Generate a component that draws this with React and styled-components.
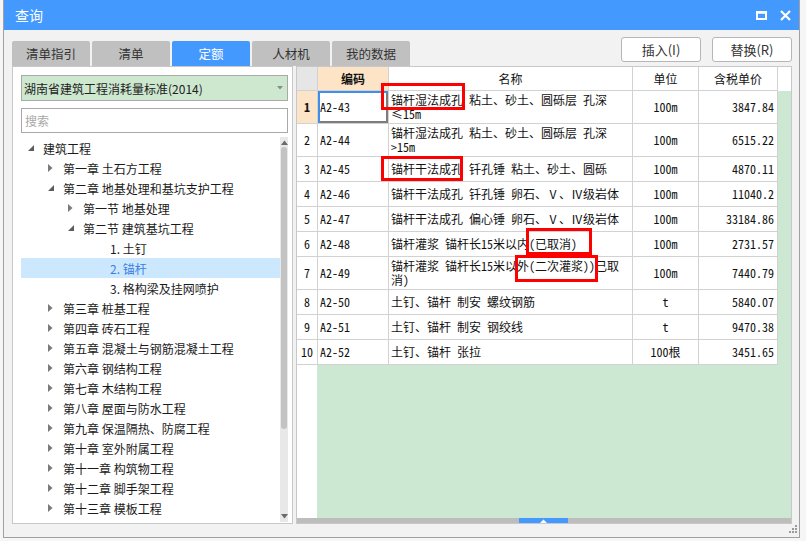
import React from "react";
import styled, { createGlobalStyle } from "styled-components";

const gridFont = `"Noto Sans Mono CJK SC", "Liberation Mono", "Noto Sans CJK SC", monospace`;

const GlobalStyle = createGlobalStyle`
  html, body {
    margin: 0;
    padding: 0;
  }
  body {
    background: #f6f6f6;
    font-family: "Noto Sans CJK SC", "Noto Sans", sans-serif;
    font-size: 12px;
    color: #222;
  }
  * {
    box-sizing: border-box;
  }
`;

const Window = styled.div`
  position: relative;
  margin-left: 3px;
  width: 797px;
  height: 538px;
  display: flex;
  flex-direction: column;
  background: #f2f2f2;
  border: 1px solid #a0a0a0;
  border-top: none;
`;

const TitleBar = styled.div`
  height: 30px;
  flex: none;
  display: flex;
  align-items: center;
  justify-content: space-between;
  background: #4499ff;
  color: #fff;
  padding: 0 8px 0 11px;
  font-size: 14px;
`;

const TitleControls = styled.div`
  display: flex;
  align-items: center;
  gap: 13px;
`;

const Body = styled.div`
  flex: 1;
  min-height: 0;
  display: flex;
  flex-direction: column;
  padding: 7px 7px 13px 8px;
`;

const Toolbar = styled.div`
  height: 29px;
  flex: none;
  display: flex;
  justify-content: space-between;
  align-items: flex-start;
`;

const Tabs = styled.div`
  align-self: flex-end;
  display: flex;
  gap: 2px;
`;

const Tab = styled.div`
  width: 78px;
  height: 25px;
  display: flex;
  align-items: center;
  justify-content: center;
  border-radius: 2px 2px 0 0;
  font-size: 12.5px;
  background: ${p => (p.active ? "#4499ff" : "#c0c0c0")};
  color: ${p => (p.active ? "#fff" : "#333")};
`;

const Buttons = styled.div`
  display: flex;
  gap: 11px;
`;

const Button = styled.div`
  width: 80px;
  height: 25px;
  display: flex;
  align-items: center;
  justify-content: center;
  background: #fff;
  border: 1px solid #b6b6b6;
  border-radius: 3px;
  font-size: 13px;
  color: #333;
`;

const Content = styled.div`
  flex: 1;
  min-height: 0;
  display: flex;
  gap: 3px;
`;

const LeftPanel = styled.div`
  width: 281px;
  flex: none;
  display: flex;
  flex-direction: column;
  background: #fff;
  border: 1px solid #c8c8c8;
  padding: 8px 4px 1px 8px;
`;

const Select = styled.div`
  height: 26px;
  flex: none;
  display: flex;
  align-items: center;
  justify-content: space-between;
  padding: 0 4px 0 2px;
  background: #cde8cf;
  border: 1px solid #a9a9a9;
  font-size: 12px;
  color: #222;
`;

const Search = styled.div`
  margin-top: 7px;
  height: 25px;
  flex: none;
  display: flex;
  align-items: center;
  padding-left: 3px;
  border: 1px solid #a9a9a9;
  color: #a8a8a8;
  font-size: 12px;
`;

const TreeBox = styled.div`
  margin-top: 4px;
  flex: 1;
  min-height: 0;
  display: flex;
  overflow: hidden;
`;

const TreeList = styled.div`
  flex: 1;
  min-width: 0;
  padding-top: 1px;
`;

const TreeRow = styled.div`
  height: 20px;
  display: flex;
  align-items: center;
  padding-left: ${p => p.indent}px;
  white-space: nowrap;
  font-size: 12px;
  background: ${p => (p.selected ? "#cce8ff" : "transparent")};
  color: ${p => (p.selected ? "#3d7fe0" : "#1a1a1a")};
`;

const Arrow = styled.span`
  width: 15px;
  flex: none;
  display: flex;
  align-items: center;
`;

const VScroll = styled.div`
  width: 8px;
  flex: none;
  display: flex;
  flex-direction: column;
  align-items: center;
  background: #e8e8e8;
  padding: 3px 0 3px;
`;

const VThumb = styled.div`
  width: 6px;
  height: 282px;
  margin-top: 2px;
  border-radius: 3px;
  background: #c3c3c3;
`;

const VSpacer = styled.div`
  flex: 1;
`;

const GridPanel = styled.div`
  position: relative;
  flex: 1;
  min-width: 0;
  display: flex;
  flex-direction: column;
  background: #fff;
  border: 1px solid #c8c8c8;
`;

const GridArea = styled.div`
  flex: 1;
  min-height: 0;
  background: linear-gradient(to right, #fff 20px, #cde8d2 20px);
`;

const Grid = styled.div`
  display: grid;
  grid-template-columns: 21px 71px 244px 66px 79px 1fr;
  grid-template-rows: 24px 33px 33px 25px 25px 25px 25px 33px 25px 25px 25px;
  font-family: ${gridFont};
  font-size: 12px;
  color: #111;
`;

const Cell = styled.div`
  display: flex;
  align-items: center;
  justify-content: ${p => p.justify || "flex-start"};
  padding: ${p => p.pad || "0 2px"};
  border-right: 1px solid #d2d2d2;
  border-bottom: 1px solid #d2d2d2;
  background: ${p => p.bg || "#fff"};
  line-height: 14px;
  overflow: hidden;
  font-weight: ${p => (p.bold ? 700 : 400)};
  box-shadow: ${p =>
    p.focused ? "inset 2px 2px 0 #3f8fea, inset -2px -2px 0 #7c7c7c" : "none"};
`;

const HeadFiller = styled.div`
  background: #fff;
`;

const Filler = styled.div``;

const HScroll = styled.div`
  height: 5px;
  flex: none;
  display: flex;
  background: #bdbdbd;
`;

const HThumb = styled.div`
  margin-left: 222px;
  width: 49px;
  height: 5px;
  display: flex;
  align-items: center;
  justify-content: center;
  background: #4499ff;
`;

const Mark = styled.div`
  position: absolute;
  left: ${p => p.x}px;
  top: ${p => p.y}px;
  width: ${p => p.w}px;
  height: ${p => p.h}px;
  border: 3px solid #f00;
  pointer-events: none;
`;

const Grip = styled.svg`
  position: absolute;
  right: 2px;
  bottom: 4px;
`;

const tree = [
  { t: "建筑工程", indent: 7, arrow: "open" },
  { t: "第一章 土石方工程", indent: 27, arrow: "closed" },
  { t: "第二章 地基处理和基坑支护工程", indent: 27, arrow: "open" },
  { t: "第一节 地基处理", indent: 47, arrow: "closed" },
  { t: "第二节 建筑基坑工程", indent: 47, arrow: "open" },
  { t: "1. 土钉", indent: 89 },
  { t: "2. 锚杆", indent: 89, selected: true },
  { t: "3. 格构梁及挂网喷护", indent: 89 },
  { t: "第三章 桩基工程", indent: 27, arrow: "closed" },
  { t: "第四章 砖石工程", indent: 27, arrow: "closed" },
  { t: "第五章 混凝土与钢筋混凝土工程", indent: 27, arrow: "closed" },
  { t: "第六章 钢结构工程", indent: 27, arrow: "closed" },
  { t: "第七章 木结构工程", indent: 27, arrow: "closed" },
  { t: "第八章 屋面与防水工程", indent: 27, arrow: "closed" },
  { t: "第九章 保温隔热、防腐工程", indent: 27, arrow: "closed" },
  { t: "第十章 室外附属工程", indent: 27, arrow: "closed" },
  { t: "第十一章 构筑物工程", indent: 27, arrow: "closed" },
  { t: "第十二章 脚手架工程", indent: 27, arrow: "closed" },
  { t: "第十三章 模板工程", indent: 27, arrow: "closed" },
  { t: "第十四章 垂直运输工程", indent: 27, arrow: "closed" }
];

const rows = [
  ["A2-43", "锚杆湿法成孔 粘土、砂土、圆砾层 孔深≤15m", "100m", "3847.84"],
  ["A2-44", "锚杆湿法成孔 粘土、砂土、圆砾层 孔深>15m", "100m", "6515.22"],
  ["A2-45", "锚杆干法成孔 钎孔锤 粘土、砂土、圆砾", "100m", "4870.11"],
  ["A2-46", "锚杆干法成孔 钎孔锤 卵石、Ⅴ、Ⅳ级岩体", "100m", "11040.2"],
  ["A2-47", "锚杆干法成孔 偏心锤 卵石、Ⅴ、Ⅳ级岩体", "100m", "33184.86"],
  ["A2-48", "锚杆灌浆 锚杆长15米以内(已取消)", "100m", "2731.57"],
  ["A2-49", "锚杆灌浆 锚杆长15米以外(二次灌浆))已取消)", "100m", "7440.79"],
  ["A2-50", "土钉、锚杆 制安 螺纹钢筋", "t", "5840.07"],
  ["A2-51", "土钉、锚杆 制安 钢绞线", "t", "9470.38"],
  ["A2-52", "土钉、锚杆 张拉", "100根", "3451.65"]
];

function TreeArrow({ kind }) {
  if (kind === "open") {
    return (
      <svg width="6" height="6" viewBox="0 0 6 6">
        <polygon points="6,0 6,6 0,6" fill="#5c5c5c" />
      </svg>
    );
  }
  if (kind === "closed") {
    return (
      <svg width="5" height="8" viewBox="0 0 5 8">
        <polygon points="0,0 4.5,4 0,8" fill="#7a7a7a" />
      </svg>
    );
  }
  return null;
}

export default function App() {
  return (
    <>
      <GlobalStyle />
      <Window>
        <TitleBar>
          <span>查询</span>
          <TitleControls>
            <svg width="11" height="9" viewBox="0 0 11 9">
              <rect x="1" y="1.5" width="9" height="6.5" fill="none" stroke="#fff" strokeWidth="2" />
              <rect x="0" y="0" width="11" height="2.5" fill="#fff" />
            </svg>
            <svg width="11" height="11" viewBox="0 0 11 11">
              <path d="M1 1 L10 10 M10 1 L1 10" stroke="#fff" strokeWidth="2.2" />
            </svg>
          </TitleControls>
        </TitleBar>

        <Body>
          <Toolbar>
            <Tabs>
              <Tab>清单指引</Tab>
              <Tab>清单</Tab>
              <Tab active>定额</Tab>
              <Tab>人材机</Tab>
              <Tab>我的数据</Tab>
            </Tabs>
            <Buttons>
              <Button>插入(I)</Button>
              <Button>替换(R)</Button>
            </Buttons>
          </Toolbar>

          <Content>
            <LeftPanel>
              <Select>
                <span>湖南省建筑工程消耗量标准(2014)</span>
                <svg width="6" height="4" viewBox="0 0 6 4">
                  <polygon points="0,0 6,0 3,3.5" fill="#8a8a8a" />
                </svg>
              </Select>
              <Search>搜索</Search>
              <TreeBox>
                <TreeList>
                  {tree.map(item => (
                    <TreeRow key={item.t} indent={item.indent} selected={item.selected}>
                      {item.arrow && (
                        <Arrow>
                          <TreeArrow kind={item.arrow} />
                        </Arrow>
                      )}
                      {item.t}
                    </TreeRow>
                  ))}
                </TreeList>
                <VScroll>
                  <svg width="7" height="5" viewBox="0 0 7 5">
                    <polygon points="0,5 7,5 3.5,0.5" fill="#6a6a6a" />
                  </svg>
                  <VThumb />
                  <VSpacer />
                  <svg width="7" height="5" viewBox="0 0 7 5">
                    <polygon points="0,0 7,0 3.5,4.5" fill="#6a6a6a" />
                  </svg>
                </VScroll>
              </TreeBox>
            </LeftPanel>

            <GridPanel>
              <GridArea>
                <Grid>
                  <Cell bg="#e6e6e6" />
                  <Cell bg="#fde4c6" justify="center" bold>编码</Cell>
                  <Cell justify="center">名称</Cell>
                  <Cell justify="center">单位</Cell>
                  <Cell justify="center">含税单价</Cell>
                  <HeadFiller />
                  {rows.map((r, i) => (
                    <React.Fragment key={r[0]}>
                      <Cell
                        justify="center"
                        pad="0"
                        bg={i === 0 ? "#fde4c6" : "#fff"}
                        bold={i === 0}
                      >
                        {i + 1}
                      </Cell>
                      <Cell focused={i === 0}>{r[0]}</Cell>
                      <Cell pad="0 7px 0 2px">{r[1]}</Cell>
                      <Cell justify="center">{r[2]}</Cell>
                      <Cell justify="flex-end" pad="0 3px 0 0">{r[3]}</Cell>
                      <Filler />
                    </React.Fragment>
                  ))}
                </Grid>
              </GridArea>
              <HScroll>
                <HThumb>
                  <svg width="7" height="4" viewBox="0 0 7 4">
                    <polygon points="0,4 7,4 3.5,0.5" fill="#fff" />
                  </svg>
                </HThumb>
              </HScroll>

              <Mark x={84} y={16} w={84} h={27} />
              <Mark x={84} y={89} w={82} h={25} />
              <Mark x={229} y={161} w={66} h={27} />
              <Mark x={218} y={188} w={83} h={27} />
            </GridPanel>
          </Content>
        </Body>

        <Grip width="8" height="8" viewBox="0 0 8 8">
          <rect x="6" y="0" width="2" height="2" fill="#9a9a9a" />
          <rect x="3" y="3" width="2" height="2" fill="#9a9a9a" />
          <rect x="6" y="3" width="2" height="2" fill="#9a9a9a" />
          <rect x="0" y="6" width="2" height="2" fill="#9a9a9a" />
          <rect x="3" y="6" width="2" height="2" fill="#9a9a9a" />
          <rect x="6" y="6" width="2" height="2" fill="#9a9a9a" />
        </Grip>
      </Window>
    </>
  );
}
